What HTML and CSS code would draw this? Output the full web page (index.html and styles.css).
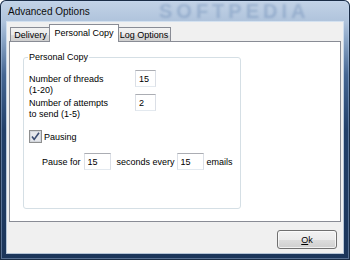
FILE: index.html
```html
<!DOCTYPE html>
<html>
<head>
<meta charset="utf-8">
<link rel="stylesheet" href="styles.css">
</head>
<body>
<div class="window">
  <div class="titlebar">
    <span class="title">Advanced Options</span>
    <span class="watermark">SOFTPEDIA</span>
  </div>
  <div class="client">
    <div class="tabs">
      <div class="tab tab-delivery">Delivery</div>
      <div class="tab tab-personal active">Personal Copy</div>
      <div class="tab tab-log">Log Options</div>
    </div>
    <div class="panel">
      <fieldset class="group">
        <legend>Personal Copy</legend>
        <div class="row row-threads">
          <label class="lbl">Number of threads<br>(1-20)</label>
          <input class="edit" type="text" value="15">
        </div>
        <div class="row row-attempts">
          <label class="lbl">Number of attempts<br>to send (1-5)</label>
          <input class="edit" type="text" value="2">
        </div>
        <label class="check">
          <svg class="box" width="13" height="13" viewBox="0 0 13 13">
            <rect x="0.5" y="0.5" width="12" height="12" fill="#f4f4f4" stroke="#8e8f8f"/>
            <rect x="1.5" y="1.5" width="10" height="10" fill="#e6e8ec" stroke="#d2d6dc"/>
            <path d="M3 6.5 L5.2 9.5 L10 2.8" fill="none" stroke="#3b4d72" stroke-width="1.6"/>
          </svg>
          <span>Pausing</span>
        </label>
        <div class="pause">
          <span class="t-pause">Pause for</span>
          <input class="edit wide e1" type="text" value="15">
          <span class="t-seconds">seconds every</span>
          <input class="edit wide e2" type="text" value="15">
          <span class="t-emails">emails</span>
        </div>
      </fieldset>
    </div>
    <div class="footer">
      <button class="btn"><u>O</u>k</button>
    </div>
  </div>
</div>
</body>
</html>
```
FILE: styles.css
```css
html, body {
  margin: 0;
  padding: 0;
}
body {
  font-family: "Liberation Sans", Arial, sans-serif;
  font-size: 9px;
  color: #000;
  width: 350px;
  height: 260px;
  overflow: hidden;
}
.window {
  width: 350px;
  height: 260px;
  box-sizing: border-box;
  display: flex;
  flex-direction: column;
  padding: 0 7px 7px 7px;
  background: linear-gradient(to bottom, #c3d3e7 0px, #afc3dc 22px, #8aa5c6 40px, #456693 75px, #22406a 130px, #1b355a 100%);
  box-shadow: inset 0 0 0 1px #1a2c45, inset 0 0 0 2px rgba(200,220,245,0.35);
  border-radius: 6px 6px 0 0;
}
.titlebar {
  height: 22px;
  position: relative;
  flex: none;
  display: flex;
  align-items: center;
}
.title {
  font-size: 10px;
  margin-left: 1px;
  position: relative;
  z-index: 1;
  color: #0c0c0c;
}
.watermark {
  position: absolute;
  left: 152px;
  top: 1px;
  font-size: 20px;
  line-height: 20px;
  font-weight: bold;
  letter-spacing: 4px;
  color: rgba(80, 115, 165, 0.3);
  filter: blur(0.9px);
}
.client {
  flex: 1;
  background: #f0f0f0;
  display: flex;
  flex-direction: column;
  padding: 2px 2px 0 2px;
  box-shadow: 0 0 0 1px rgba(220, 232, 245, 0.8);
}
.tabs {
  display: flex;
  align-items: flex-end;
  height: 18px;
  padding-left: 1px;
  margin-bottom: -1px;
  position: relative;
  z-index: 1;
}
.tab {
  box-sizing: border-box;
  height: 14px;
  margin-bottom: 1px;
  border: 1px solid #898c95;
  border-bottom: none;
  background: linear-gradient(to bottom, #f2f2f2 0%, #ebebeb 50%, #dddddd 51%, #cfcfcf 100%);
  display: flex;
  align-items: center;
  justify-content: center;
  line-height: 12px;
  padding-top: 1px;
}
.tab-delivery { width: 41px; }
.tab-personal { width: 70px; margin: 0 -2px; }
.tab-log { width: 54px; }
.tab.active {
  height: 18px;
  margin-bottom: 0;
  background: #fff;
  position: relative;
  z-index: 2;
  padding-top: 0;
  padding-bottom: 2px;
}
.panel {
  flex: none;
  height: 181px;
  box-sizing: border-box;
  border: 1px solid #898c95;
  background: #fff;
  padding: 9px 0 0 13px;
}
.group {
  box-sizing: border-box;
  width: 218px;
  height: 158px;
  margin: 0;
  padding: 0 0 0 5px;
  border: 1px solid #d5dfe5;
  border-radius: 3px;
}
.group legend {
  padding: 0 1px;
  margin-left: -1px;
  line-height: 12px;
  font-size: 9px;
}
.row {
  display: flex;
  align-items: flex-start;
  height: 24px;
}
.row-threads { margin-top: 7px; }
.lbl {
  width: 106px;
  line-height: 11px;
  padding-top: 4px;
  white-space: nowrap;
}
.edit {
  box-sizing: border-box;
  width: 21px;
  height: 17px;
  margin: 0;
  padding: 0 0 0 3px;
  border: 1px solid #e3e9ef;
  border-top-color: #abadb3;
  border-left-color: #dbdfe6;
  border-right-color: #dbdfe6;
  font-family: "Liberation Sans", Arial, sans-serif;
  font-size: 9px;
  color: #000;
  background: #fff;
  outline: none;
}
.edit.wide { width: 27px; }
.check {
  display: flex;
  align-items: center;
  height: 13px;
  margin-top: 12px;
}
.check .box { flex: none; }
.check span { margin-left: 2px; }
.pause {
  display: flex;
  align-items: center;
  height: 17px;
  margin-top: 10px;
  padding-left: 13px;
}
.pause .e1 { margin-left: 3px; }
.pause .t-seconds { margin-left: 6px; }
.pause .e2 { margin-left: 2px; }
.pause .t-emails { margin-left: 3px; }
.footer {
  flex: 1;
  display: flex;
  justify-content: flex-end;
  align-items: flex-start;
  padding: 8px 4px 0 0;
}
.btn {
  box-sizing: border-box;
  width: 60px;
  height: 19px;
  border: 1px solid #707070;
  border-radius: 3px;
  background: linear-gradient(to bottom, #f2f2f2 0%, #ebebeb 50%, #dddddd 51%, #cfcfcf 100%);
  box-shadow: inset 0 0 0 1px rgba(255, 255, 255, 0.7);
  font-family: "Liberation Sans", Arial, sans-serif;
  font-size: 9px;
  color: #000;
  padding: 0;
  margin: 0;
}
```
